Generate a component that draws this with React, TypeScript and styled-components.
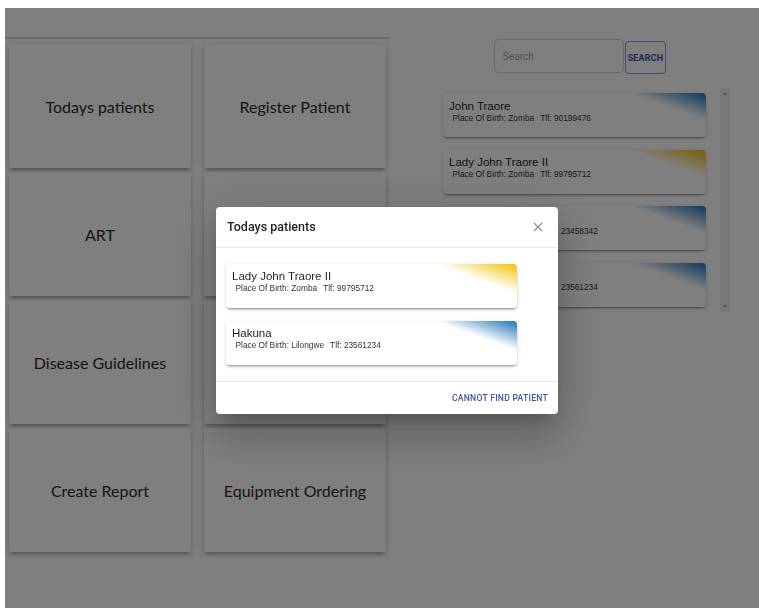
import React from "react";
import styled, { createGlobalStyle } from "styled-components";

const GlobalStyle = createGlobalStyle`
  html, body {
    margin: 0;
    padding: 0;
    background: #ffffff;
  }
  body {
    font-family: "Lato", "Open Sans", sans-serif;
  }
  * {
    box-sizing: border-box;
  }
`;

type Tone = "blue" | "gold";

type Patient = {
  name: string;
  birthPlace: string;
  phone: string;
  tone: Tone;
};

const patients: Patient[] = [
  { name: "John Traore", birthPlace: "Zomba", phone: "90199476", tone: "blue" },
  { name: "Lady John Traore II", birthPlace: "Zomba", phone: "99795712", tone: "gold" },
  { name: "Chikondi Phiri", birthPlace: "Lilongwe", phone: "23458342", tone: "blue" },
  { name: "Hakuna", birthPlace: "Lilongwe", phone: "23561234", tone: "blue" },
];

const todays: Patient[] = [patients[1], patients[3]];

// Menu tiles, row by row; the two tiles under the dialog carry no label.
const tiles = [
  "Todays patients",
  "Register Patient",
  "ART",
  "",
  "Disease Guidelines",
  "",
  "Create Report",
  "Equipment Ordering",
];

const toneColor: Record<Tone, string> = {
  blue: "#2273b8",
  gold: "#f2c200",
};

const Page = styled.div`
  display: flex;
  padding: 8px 0 0 5px;
  height: 608px;
  overflow: hidden;
`;

const LeftPanel = styled.section`
  width: 385px;
  flex: none;
`;

const TopStrip = styled.div`
  height: 31px;
  border-bottom: 2px solid #d6d6d6;
`;

const TileGrid = styled.div`
  display: grid;
  grid-template-columns: 182px 182px;
  grid-auto-rows: 124px;
  column-gap: 13px;
  row-gap: 4px;
  padding: 5px 4px 0 4px;
`;

const Tile = styled.button`
  display: flex;
  align-items: center;
  justify-content: center;
  border: none;
  border-radius: 2px;
  background: #ffffff;
  color: #2a2a2a;
  font-family: "Lato", "Open Sans", sans-serif;
  font-size: 16px;
  box-shadow: 0px 3px 3px -2px rgba(0, 0, 0, 0.2),
    0px 3px 4px 0px rgba(0, 0, 0, 0.14), 0px 1px 8px 0px rgba(0, 0, 0, 0.12);
  cursor: pointer;
`;

const RightPanel = styled.section`
  flex: 1;
  display: flex;
  flex-direction: column;
  align-items: flex-start;
  padding-top: 31px;
`;

const SearchRow = styled.div`
  display: flex;
  align-items: flex-start;
  margin-left: 104px;
`;

const SearchInput = styled.input`
  width: 130px;
  height: 34px;
  border: 1px solid #d2d2d2;
  border-radius: 4px;
  padding: 0 8px;
  font-family: "Roboto", sans-serif;
  font-size: 10px;
  color: #333;
  outline: none;
  &::placeholder {
    color: #a6a6a6;
  }
`;

const SearchButton = styled.button`
  width: 41px;
  height: 33px;
  margin-top: 2px;
  margin-left: 1px;
  padding: 0;
  border: 1px solid rgba(63, 81, 181, 0.6);
  border-radius: 4px;
  background: #ffffff;
  color: #3f51b5;
  font-family: "Roboto", sans-serif;
  font-weight: 700;
  font-size: 9px;
  letter-spacing: 0.02em;
  cursor: pointer;
`;

const ListFrame = styled.div`
  display: flex;
  margin: 14px 0 0 48px;
  height: 223.5px;
`;

const PatientList = styled.div`
  display: flex;
  flex-direction: column;
  gap: 12.5px;
  padding: 5px 14px 5px 5px;
  overflow: hidden;
`;

const ScrollTrack = styled.div`
  display: flex;
  flex-direction: column;
  justify-content: space-between;
  align-items: center;
  width: 10px;
  padding: 4px 0;
  background: #f1f1f1;
`;

const ScrollArrow = styled.span<{ $down?: boolean }>`
  width: 0;
  height: 0;
  border-left: 2.5px solid transparent;
  border-right: 2.5px solid transparent;
  ${(p) =>
    p.$down
      ? "border-top: 3px solid #a3a3a3;"
      : "border-bottom: 3px solid #a3a3a3;"}
`;

const Card = styled.div<{ $tone: Tone; $width: number }>`
  flex: none;
  width: ${(p) => p.$width}px;
  height: 44px;
  padding: 6.5px 6px;
  border-radius: 4px;
  background: linear-gradient(
      200deg,
      ${(p) => toneColor[p.$tone]} 0%,
      rgba(255, 255, 255, 0) 20%
    ),
    #ffffff;
  box-shadow: 0px 3px 1px -2px rgba(0, 0, 0, 0.2),
    0px 2px 2px 0px rgba(0, 0, 0, 0.14), 0px 1px 5px 0px rgba(0, 0, 0, 0.12);
`;

const CardName = styled.div`
  font-family: "Liberation Sans", Arial, sans-serif;
  font-size: 11.5px;
  line-height: 13px;
  color: #1e1e1e;
  white-space: nowrap;
`;

const CardMeta = styled.div`
  font-family: "Liberation Sans", Arial, sans-serif;
  font-size: 8.3px;
  line-height: 10px;
  color: #333333;
  padding-left: 3.5px;
  white-space: nowrap;
`;

const Phone = styled.span`
  margin-left: 6px;
`;

const Backdrop = styled.div`
  position: fixed;
  top: 8px;
  left: 5px;
  right: 0;
  bottom: 0;
  display: flex;
  align-items: center;
  justify-content: center;
  padding: 4px 0 0 10px;
  background-color: rgba(0, 0, 0, 0.5);
`;

const Dialog = styled.div`
  width: 342px;
  background: #ffffff;
  border-radius: 4px;
  box-shadow: 0px 11px 15px -7px rgba(0, 0, 0, 0.2),
    0px 24px 38px 3px rgba(0, 0, 0, 0.14), 0px 9px 46px 8px rgba(0, 0, 0, 0.12);
  overflow: hidden;
`;

const DialogHeader = styled.header`
  display: flex;
  align-items: center;
  justify-content: space-between;
  height: 41px;
  padding: 0 15px 0 11px;
  border-bottom: 1px solid #e9e9e9;
`;

const DialogTitle = styled.h2`
  margin: 0;
  font-family: "Roboto", sans-serif;
  font-weight: 500;
  font-size: 12.5px;
  color: #222222;
`;

const CloseButton = styled.button`
  display: flex;
  padding: 0;
  border: none;
  background: none;
  cursor: pointer;
`;

const DialogBody = styled.div`
  display: flex;
  flex-direction: column;
  gap: 13px;
  padding: 16px 10px;
  border-bottom: 1px solid #e9e9e9;
`;

const DialogFooter = styled.footer`
  display: flex;
  align-items: center;
  justify-content: flex-end;
  height: 32px;
  padding-right: 10px;
`;

const TextButton = styled.button`
  padding: 0;
  border: none;
  background: none;
  color: #4552a6;
  font-family: "Roboto", sans-serif;
  font-weight: 500;
  font-size: 8.6px;
  letter-spacing: 0.03em;
  text-transform: uppercase;
  cursor: pointer;
`;

function PatientCard({ patient, width }: { patient: Patient; width: number }) {
  return (
    <Card $tone={patient.tone} $width={width}>
      <CardName>{patient.name}</CardName>
      <CardMeta>
        Place Of Birth: {patient.birthPlace}
        <Phone>Tlf: {patient.phone}</Phone>
      </CardMeta>
    </Card>
  );
}

export default function App() {
  return (
    <>
      <GlobalStyle />
      <Page>
        <LeftPanel>
          <TopStrip />
          <TileGrid>
            {tiles.map((t, i) => (
              <Tile key={i}>{t}</Tile>
            ))}
          </TileGrid>
        </LeftPanel>
        <RightPanel>
          <SearchRow>
            <SearchInput placeholder="Search" />
            <SearchButton>SEARCH</SearchButton>
          </SearchRow>
          <ListFrame>
            <PatientList>
              {patients.map((p) => (
                <PatientCard key={p.name} patient={p} width={263} />
              ))}
            </PatientList>
            <ScrollTrack>
              <ScrollArrow />
              <ScrollArrow $down />
            </ScrollTrack>
          </ListFrame>
        </RightPanel>
      </Page>
      <Backdrop>
        <Dialog>
          <DialogHeader>
            <DialogTitle>Todays patients</DialogTitle>
            <CloseButton aria-label="Close">
              <svg width="10" height="10" viewBox="0 0 10 10">
                <path d="M1 1 L9 9 M9 1 L1 9" stroke="#8c8c8c" strokeWidth="1.1" />
              </svg>
            </CloseButton>
          </DialogHeader>
          <DialogBody>
            {todays.map((p) => (
              <PatientCard key={p.name} patient={p} width={291} />
            ))}
          </DialogBody>
          <DialogFooter>
            <TextButton>Cannot find patient</TextButton>
          </DialogFooter>
        </Dialog>
      </Backdrop>
    </>
  );
}
